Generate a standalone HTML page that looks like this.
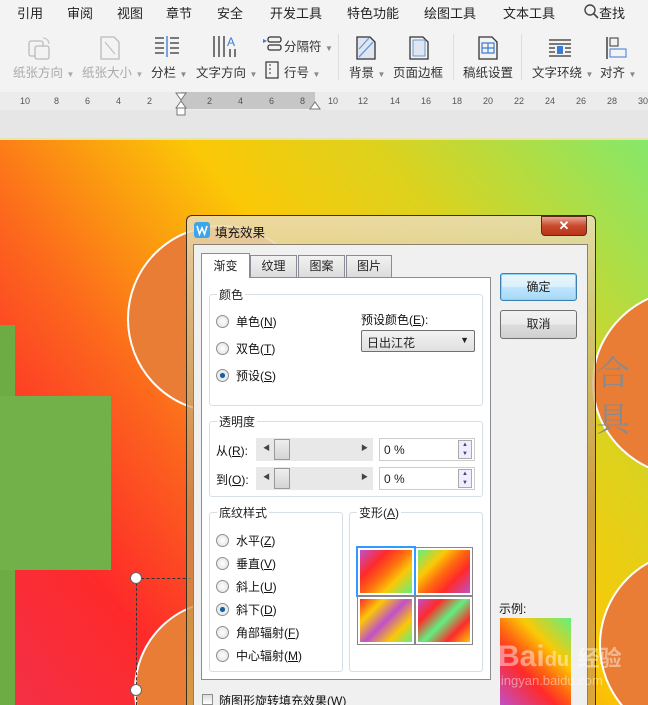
<!DOCTYPE html>
<html style="overflow:hidden"><head><meta charset="utf-8"><style>
*{margin:0;padding:0;box-sizing:border-box}
body{width:648px;height:705px;overflow:hidden;position:relative;font-family:"Liberation Sans","Noto Sans CJK SC",sans-serif;font-size:12px;color:#222;background:#f3f3f3}
.a{position:absolute;white-space:nowrap}
.menu{font-size:13px;top:3px;color:#222}
.tl{font-size:12.5px;color:#333}
.dis{color:#aaa}
.doc{position:absolute;left:0;top:140px;width:648px;height:565px;overflow:hidden;background:linear-gradient(52deg,#f3304a 0%,#fe2a2a 18%,#fc6a1c 36%,#fb9a10 47%,#fbc806 58%,#dcd21e 75%,#85e86a 100%)}
.circ{position:absolute;border-radius:50%;background:#ea7d35;border:2px solid #fff}
.dlgtext{font-size:12px;color:#111}
.radio{position:absolute;width:13px;height:13px;border-radius:50%;border:1px solid #8e8f8f;background:radial-gradient(circle,#fff 0%,#e8e8e8 70%,#d0d0d0 100%)}
.radio.on::after{content:"";position:absolute;left:3px;top:3px;width:5px;height:5px;border-radius:50%;background:#1a5f9a;box-shadow:0 0 1px #3ba0e0}
.grp{position:absolute;border:1px solid #d5dfe5;border-radius:3px}
.gl{position:absolute;background:#fff;padding:0 2px;font-size:12px;top:-9px;left:7px}
.tab{position:absolute;top:255px;height:22px;border:1px solid #898c95;border-bottom:none;background:linear-gradient(#f2f2f2,#dcdcdc);text-align:center;line-height:21px;font-size:12px}
.btn{position:absolute;border:1px solid #707070;border-radius:3px;background:linear-gradient(#f2f2f2 0%,#ebebeb 50%,#dddddd 51%,#cfcfcf 100%);text-align:center;font-size:12px}
.sw{position:absolute;width:56px;height:47px;border:2px solid #fff;outline:1px solid #888}
u{text-decoration:underline}
</style></head><body>
<div class="a menu" style="left:17px">引用</div>
<div class="a menu" style="left:67px">审阅</div>
<div class="a menu" style="left:117px">视图</div>
<div class="a menu" style="left:166px">章节</div>
<div class="a menu" style="left:217px">安全</div>
<div class="a menu" style="left:270px">开发工具</div>
<div class="a menu" style="left:347px">特色功能</div>
<div class="a menu" style="left:424px">绘图工具</div>
<div class="a menu" style="left:503px">文本工具</div>
<svg class="a" style="left:583px;top:3px" width="16" height="16"><circle cx="7" cy="7" r="5" fill="none" stroke="#444" stroke-width="1.4"/><path d="M10.5 10.5L15 15" stroke="#444" stroke-width="1.6"/></svg>
<div class="a menu" style="left:599px">查找</div>
<svg class="a" style="left:28px;top:35px" width="26" height="26"><rect x="1" y="6" width="14" height="15" rx="2" fill="none" stroke="#bbb" stroke-width="1.3"/><rect x="7" y="11" width="14" height="13" rx="2" fill="#f3f3f3" stroke="#bbb" stroke-width="1.3"/><path d="M15 3a6 6 0 0 1 6 6" fill="none" stroke="#bbb"/></svg>
<svg class="a" style="left:99px;top:35px" width="22" height="26"><path d="M2 2h13l5 5v17H2z" fill="none" stroke="#bbb" stroke-width="1.3"/><path d="M6 7l10 12" stroke="#bbb"/></svg>
<svg class="a" style="left:154px;top:36px" width="26" height="22"><g stroke="#333" stroke-width="1.3"><path d="M1 2h9M1 7h9M1 12h9M1 17h9M16 2h9M16 7h9M16 12h9M16 17h9"/></g><path d="M13 0v21" stroke="#3a7bd5" stroke-width="1.3"/></svg>
<svg class="a" style="left:212px;top:34px" width="26" height="24"><g stroke="#333" stroke-width="1.3"><path d="M2 2v21M7 2v21M12 2v21M18 15v8M23 15v8"/></g><text x="15" y="12" font-size="12" fill="#3a7bd5" font-family="Liberation Sans">A</text></svg>
<svg class="a" style="left:263px;top:36px" width="20" height="16"><path d="M0 3l4 2-4 2z" fill="#3a7bd5"/><rect x="5" y="1" width="13" height="5" rx="2" fill="none" stroke="#333" stroke-width="1.3"/><rect x="5" y="9" width="13" height="5" rx="2" fill="none" stroke="#333" stroke-width="1.3"/></svg>
<div class="a tl" style="left:284px;top:36px">分隔符 <span style="color:#888;font-size:8px">▼</span></div>
<svg class="a" style="left:265px;top:61px" width="14" height="18"><rect x="1" y="1" width="12" height="16" fill="none" stroke="#333" stroke-width="1.2"/><path d="M4 4h2M4 8h2M4 12h2" stroke="#333"/></svg>
<div class="a tl" style="left:284px;top:62px">行号 <span style="color:#888;font-size:8px">▼</span></div>
<svg class="a" style="left:355px;top:35px" width="22" height="26"><path d="M2 2h13l5 5v17H2z" fill="#dfe6ef" stroke="#333" stroke-width="1.3"/><path d="M4 14l10-11M4 22l14-15" stroke="#6a9ad8" stroke-width="1.3"/></svg>
<svg class="a" style="left:408px;top:35px" width="22" height="26"><path d="M2 2h13l5 5v17H2z" fill="none" stroke="#333" stroke-width="1.3"/><rect x="5" y="5" width="12" height="16" fill="#dfe6ef" stroke="#6a9ad8"/></svg>
<svg class="a" style="left:477px;top:35px" width="22" height="26"><path d="M2 2h13l5 5v17H2z" fill="none" stroke="#333" stroke-width="1.3"/><path d="M5 8h12v10H5zM11 8v10M5 13h12" fill="none" stroke="#3a7bd5" stroke-width="1.2"/></svg>
<svg class="a" style="left:548px;top:38px" width="24" height="20"><g stroke="#333" stroke-width="1.2"><path d="M1 2h22M1 6h22M1 10h6M17 10h6M1 14h6M17 14h6M1 18h22"/></g><path d="M9 8h6v8H9z" fill="#3a7bd5"/></svg>
<svg class="a" style="left:605px;top:36px" width="22" height="24"><path d="M2 1v22" stroke="#333" stroke-width="1.4"/><rect x="5" y="2" width="8" height="8" fill="none" stroke="#333"/><rect x="5" y="13" width="16" height="8" fill="none" stroke="#3a7bd5"/></svg>
<div class="a tl dis" style="left:13px;top:62px">纸张方向 <span style="font-size:8px">▼</span></div>
<div class="a tl dis" style="left:82px;top:62px">纸张大小 <span style="font-size:8px">▼</span></div>
<div class="a tl" style="left:151px;top:62px">分栏 <span style="color:#888;font-size:8px">▼</span></div>
<div class="a tl" style="left:196px;top:62px">文字方向 <span style="color:#888;font-size:8px">▼</span></div>
<div class="a tl" style="left:349px;top:62px">背景 <span style="color:#888;font-size:8px">▼</span></div>
<div class="a tl" style="left:393px;top:62px">页面边框</div>
<div class="a tl" style="left:463px;top:62px">稿纸设置</div>
<div class="a tl" style="left:532px;top:62px">文字环绕 <span style="color:#888;font-size:8px">▼</span></div>
<div class="a tl" style="left:600px;top:62px">对齐 <span style="color:#888;font-size:8px">▼</span></div>
<div class="a" style="left:338px;top:34px;width:1px;height:46px;background:#ddd"></div>
<div class="a" style="left:453px;top:34px;width:1px;height:46px;background:#ddd"></div>
<div class="a" style="left:521px;top:34px;width:1px;height:46px;background:#ddd"></div>
<!-- ruler -->
<div class="a" style="left:0;top:92px;width:648px;height:18px;background:#ececec"></div>
<div class="a" style="left:0;top:110px;width:648px;height:28px;background:#e6e6e6"></div>
<div class="a" style="left:0;top:138px;width:648px;height:2px;background:#e8e4b0"></div>
<div class="a" style="left:181px;top:92px;width:134px;height:17px;background:#c6c6c6"></div>
<div class="a" style="left:0;top:96px;width:648px;font-size:9px;color:#555">
<span class="a" style="left:20px">10</span><span class="a" style="left:54px">8</span><span class="a" style="left:85px">6</span><span class="a" style="left:116px">4</span><span class="a" style="left:147px">2</span><span class="a" style="left:207px">2</span><span class="a" style="left:238px">4</span><span class="a" style="left:269px">6</span><span class="a" style="left:300px">8</span><span class="a" style="left:328px">10</span><span class="a" style="left:358px">12</span><span class="a" style="left:390px">14</span><span class="a" style="left:421px">16</span><span class="a" style="left:452px">18</span><span class="a" style="left:483px">20</span><span class="a" style="left:514px">22</span><span class="a" style="left:545px">24</span><span class="a" style="left:576px">26</span><span class="a" style="left:607px">28</span><span class="a" style="left:638px">30</span></div>
<svg class="a" style="left:174px;top:92px" width="14" height="24"><path d="M2 1h10L7 8z M2 16h10L7 9z" fill="#fff" stroke="#777"/><rect x="3" y="16" width="8" height="7" fill="#fff" stroke="#777"/></svg>
<svg class="a" style="left:309px;top:98px" width="12" height="12"><path d="M1 11L6 4l5 7z" fill="#fff" stroke="#777"/></svg>
<div class="doc">
 <div class="a" style="left:0;top:185px;width:15px;height:380px;background:#6dab44"></div>
 <div class="a" style="left:0;top:256px;width:111px;height:174px;background:#72b04a"></div>
 <div class="circ" style="left:127px;top:85px;width:188px;height:188px"></div>
 <div class="circ" style="left:592px;top:148px;width:200px;height:190px"></div>
 <div class="circ" style="left:599px;top:410px;width:190px;height:190px"></div>
 <div class="circ" style="left:134px;top:460px;width:180px;height:180px"></div>
 <div class="a" style="left:136px;top:438px;width:60px;height:1px;border-top:1px dashed #333"></div>
 <div class="a" style="left:136px;top:438px;width:1px;height:127px;border-left:1px dashed #333"></div>
 <div class="a" style="left:130px;top:432px;width:12px;height:12px;border-radius:50%;background:#fff;border:1px solid #666"></div>
 <div class="a" style="left:130px;top:544px;width:12px;height:12px;border-radius:50%;background:#fff;border:1px solid #666"></div>
 <div class="a" style="left:596px;top:208px;font-size:34px;color:#8a8a8a;font-family:'Noto Serif CJK SC',serif;line-height:46px">合<br>具</div>
</div>
<div class="a" style="left:186px;top:215px;width:410px;height:490px;border:1px solid #3a3020;border-bottom:none;border-radius:6px 6px 0 0;background:linear-gradient(180deg,rgba(235,220,180,.88) 0%,rgba(215,195,140,.75) 20%,rgba(195,140,80,.75) 60%,rgba(210,160,70,.8) 100%)"></div>
<svg class="a" style="left:194px;top:222px" width="16" height="16"><rect width="16" height="16" rx="3" fill="#3ba6ea"/><path d="M3 4l2.5 8 2.5-6 2.5 6L13 4" fill="none" stroke="#fff" stroke-width="1.6"/></svg>
<div class="a" style="left:215px;top:222px;font-size:12.5px;color:#111">填充效果</div>
<div class="a" style="left:541px;top:216px;width:46px;height:20px;border:1px solid #5a2a20;border-radius:0 0 4px 4px;background:linear-gradient(#e8a58f,#c9492c 50%,#b83418);color:#fff;text-align:center;font-size:13px;font-weight:bold;line-height:18px">✕</div>
<div class="a" style="left:193px;top:244px;width:395px;height:461px;background:#f0f0f0;border:1px solid #8a8070;border-bottom:none"></div>
<div class="a" style="left:201px;top:277px;width:290px;height:403px;background:#fff;border:1px solid #898c95"></div>
<div class="tab" style="left:250px;width:47px">纹理</div>
<div class="tab" style="left:298px;width:47px">图案</div>
<div class="tab" style="left:346px;width:46px">图片</div>
<div class="tab" style="left:201px;top:253px;width:49px;height:25px;background:#fff;line-height:25px">渐变</div>
<div class="grp" style="left:209px;top:294px;width:274px;height:112px"><span class="gl">颜色</span></div>
<div class="radio" style="left:216px;top:315px"></div><div class="a dlgtext" style="left:236px;top:313px">单色(<u>N</u>)</div>
<div class="radio" style="left:216px;top:342px"></div><div class="a dlgtext" style="left:236px;top:340px">双色(<u>T</u>)</div>
<div class="radio on" style="left:216px;top:369px"></div><div class="a dlgtext" style="left:236px;top:367px">预设(<u>S</u>)</div>
<div class="a dlgtext" style="left:361px;top:311px">预设颜色(<u>E</u>):</div>
<div class="a" style="left:361px;top:330px;width:114px;height:22px;border:1px solid #707070;border-radius:2px;background:linear-gradient(#f2f2f2,#e0e0e0);font-size:12px;padding:3px 0 0 5px">日出江花<span style="position:absolute;right:5px;top:4px;font-size:9px">▼</span></div>
<div class="grp" style="left:209px;top:421px;width:274px;height:76px"><span class="gl">透明度</span></div>
<div class="a dlgtext" style="left:216px;top:442px">从(<u>R</u>):</div>
<div class="a dlgtext" style="left:216px;top:471px">到(<u>O</u>):</div>
<div class="a" style="left:256px;top:438px;width:117px;height:23px;background:#e8e8e8"></div>
<div class="a" style="left:256px;top:467px;width:117px;height:23px;background:#e8e8e8"></div>
<div class="a" style="left:263px;top:443px;font-size:7px;color:#444">◀</div><div class="a" style="left:361px;top:443px;font-size:7px;color:#444">▶</div>
<div class="a" style="left:263px;top:472px;font-size:7px;color:#444">◀</div><div class="a" style="left:361px;top:472px;font-size:7px;color:#444">▶</div>
<div class="a" style="left:274px;top:439px;width:16px;height:21px;border:1px solid #999;background:linear-gradient(#eee,#d4d4d4)"></div>
<div class="a" style="left:274px;top:468px;width:16px;height:21px;border:1px solid #999;background:linear-gradient(#eee,#d4d4d4)"></div>
<div class="a" style="left:379px;top:438px;width:96px;height:23px;border:1px solid #ccc;background:#fff;font-size:12px;padding:4px 0 0 4px">0 %</div>
<div class="a" style="left:379px;top:467px;width:96px;height:23px;border:1px solid #ccc;background:#fff;font-size:12px;padding:4px 0 0 4px">0 %</div>
<div class="a" style="left:458px;top:440px;width:14px;height:19px;border:1px solid #aaa;background:#eef;font-size:6px;color:#447;line-height:9px;text-align:center">▲<br>▼</div>
<div class="a" style="left:458px;top:469px;width:14px;height:19px;border:1px solid #aaa;background:#eef;font-size:6px;color:#447;line-height:9px;text-align:center">▲<br>▼</div>
<div class="grp" style="left:209px;top:512px;width:134px;height:160px"><span class="gl">底纹样式</span></div>
<div class="radio" style="left:216px;top:534px"></div><div class="a dlgtext" style="left:236px;top:532px">水平(<u>Z</u>)</div>
<div class="radio" style="left:216px;top:557px"></div><div class="a dlgtext" style="left:236px;top:555px">垂直(<u>V</u>)</div>
<div class="radio" style="left:216px;top:580px"></div><div class="a dlgtext" style="left:236px;top:578px">斜上(<u>U</u>)</div>
<div class="radio on" style="left:216px;top:603px"></div><div class="a dlgtext" style="left:236px;top:601px">斜下(<u>D</u>)</div>
<div class="radio" style="left:216px;top:626px"></div><div class="a dlgtext" style="left:236px;top:624px">角部辐射(<u>F</u>)</div>
<div class="radio" style="left:216px;top:649px"></div><div class="a dlgtext" style="left:236px;top:647px">中心辐射(<u>M</u>)</div>
<div class="grp" style="left:349px;top:512px;width:134px;height:160px"><span class="gl">变形(<u>A</u>)</span></div>
<div class="sw" style="left:358px;top:548px;outline:2px solid #3399ff;background:linear-gradient(135deg,#c050c8 0%,#ff2a2a 30%,#ff6a10 50%,#fbc806 70%,#60f080 100%)"></div>
<div class="sw" style="left:416px;top:548px;background:linear-gradient(135deg,#c050c8 0%,#ff2a2a 30%,#ff6a10 50%,#fbc806 70%,#60f080 100%);transform:rotate(180deg)"></div>
<div class="sw" style="left:358px;top:597px;background:linear-gradient(135deg,#ff2a2a 0%,#fbc806 25%,#c050c8 50%,#fbc806 75%,#60f080 100%)"></div>
<div class="sw" style="left:416px;top:597px;background:linear-gradient(135deg,#c050c8 0%,#ff2a2a 25%,#60f080 50%,#ff2a2a 75%,#fbc806 100%)"></div>
<div class="btn" style="left:500px;top:273px;width:77px;height:28px;line-height:26px;border-color:#3c7fb1;background:linear-gradient(#eaf6fd,#d9f0fc 50%,#bee6fd 51%,#a7d9f5);box-shadow:inset 0 0 0 1px #8fd0f5">确定</div>
<div class="btn" style="left:500px;top:310px;width:77px;height:29px;line-height:27px">取消</div>
<div class="a dlgtext" style="left:499px;top:600px">示例:</div>
<div class="a" style="left:500px;top:618px;width:71px;height:87px;background:linear-gradient(45deg,#c050c8 0%,#ff2a2a 35%,#ff6a10 50%,#fbc806 68%,#60f080 100%)"></div>
<div class="a" style="left:498px;top:640px;font-size:30px;font-weight:bold;color:rgba(255,255,255,.45);font-family:'Liberation Sans',sans-serif">Bai<span style="font-size:20px">du</span> <span style="font-size:22px;font-family:'Noto Sans CJK SC',sans-serif">经验</span></div>
<div class="a" style="left:498px;top:673px;font-size:13px;color:rgba(255,255,255,.45)">jingyan.baidu.com</div>
<div class="a" style="left:202px;top:694px;width:11px;height:11px;border:1px solid #8e8f8f;background:linear-gradient(#ddd,#fff)"></div>
<div class="a dlgtext" style="left:219px;top:692px">随图形旋转填充效果(W)</div>
</body></html>
